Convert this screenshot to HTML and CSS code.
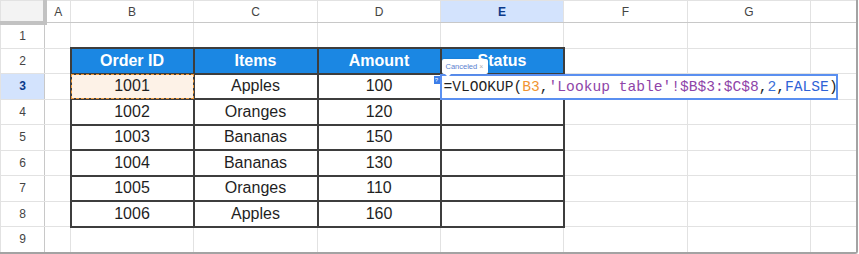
FILE: index.html
```html
<!DOCTYPE html>
<html>
<head>
    <meta charset="UTF-8">
    <title>Lookup sheet</title>
    <link rel="stylesheet" href="styles.css">
</head>
<body>
<div class="frame">
    <table class="sheet">
        <colgroup>
            <col class="col-rh">
            <col class="col-a">
            <col class="col-w">
            <col class="col-w2">
            <col class="col-w">
            <col class="col-w">
            <col class="col-w2">
            <col class="col-w">
            <col class="col-h">
        </colgroup>
        <thead>
            <tr>
                <th class="corner"></th>
                <th>A</th>
                <th>B</th>
                <th>C</th>
                <th>D</th>
                <th class="sel">E</th>
                <th>F</th>
                <th>G</th>
                <th></th>
            </tr>
        </thead>
        <tbody>
            <tr>
                <th>1</th>
                <td></td><td></td><td></td><td></td><td></td><td></td><td></td><td></td>
            </tr>
            <tr>
                <th>2</th>
                <td></td>
                <td class="t hd">Order ID</td>
                <td class="t hd">Items</td>
                <td class="t hd">Amount</td>
                <td class="t hd">Status</td>
                <td></td><td></td><td></td>
            </tr>
            <tr>
                <th class="sel">3</th>
                <td></td>
                <td class="t ref">1001</td>
                <td class="t">Apples</td>
                <td class="t">100</td>
                <td class="t active">
                    <div class="chip">Canceled <span class="chip-x">×</span></div>
                    <div class="badge">?</div>
                    <div class="editor">=VLOOKUP(<span class="f-ref">B3</span>,<span class="f-range">'Lookup table'!$B$3:$C$8</span>,<span class="f-num">2</span>,<span class="f-bool">FALSE</span>)</div>
                </td>
                <td></td><td></td><td></td>
            </tr>
            <tr>
                <th>4</th>
                <td></td>
                <td class="t">1002</td>
                <td class="t">Oranges</td>
                <td class="t">120</td>
                <td class="t"></td>
                <td></td><td></td><td></td>
            </tr>
            <tr>
                <th>5</th>
                <td></td>
                <td class="t">1003</td>
                <td class="t">Bananas</td>
                <td class="t">150</td>
                <td class="t"></td>
                <td></td><td></td><td></td>
            </tr>
            <tr>
                <th>6</th>
                <td></td>
                <td class="t">1004</td>
                <td class="t">Bananas</td>
                <td class="t">130</td>
                <td class="t"></td>
                <td></td><td></td><td></td>
            </tr>
            <tr>
                <th>7</th>
                <td></td>
                <td class="t">1005</td>
                <td class="t">Oranges</td>
                <td class="t">110</td>
                <td class="t"></td>
                <td></td><td></td><td></td>
            </tr>
            <tr>
                <th>8</th>
                <td></td>
                <td class="t">1006</td>
                <td class="t">Apples</td>
                <td class="t">160</td>
                <td class="t"></td>
                <td></td><td></td><td></td>
            </tr>
            <tr>
                <th>9</th>
                <td></td><td></td><td></td><td></td><td></td><td></td><td></td><td></td>
            </tr>
        </tbody>
    </table>
</div>
</body>
</html>
```

FILE: styles.css
```css
body {
    margin: 0;
    background-color: white;
    font-family: 'Liberation Sans', Arial, sans-serif;
}

:root {
    --clr-grid: #e2e2e2;
    --clr-border: #3d3d3d;
    --clr-blue: #1b87e3;
    --clr-sel: #d3e3fd;
}

.frame {
    width: 856px;
    height: 252px;
    overflow: hidden;
    border-right: 2px solid #a3a3a3;
    border-bottom: 2px solid #a3a3a3;
    border-bottom-right-radius: 3px;
}

.sheet {
    border-collapse: collapse;
    table-layout: fixed;
    width: 856px;
}

.col-rh { width: 44px; }
.col-a { width: 26px; }
.col-w { width: 123px; }
.col-w2 { width: 124px; }
.col-h { width: 46px; }

.sheet th {
    font-weight: normal;
    font-size: 12px;
    color: #444;
    padding: 0;
    border: 1px solid var(--clr-grid);
}

.sheet thead tr {
    height: 22px;
}

.sheet thead th {
    border-bottom-color: #c8c8c8;
}

.sheet tbody tr {
    height: 25.5px;
}

.sheet tbody th {
    border-right-color: #c8c8c8;
}

.sheet th.corner {
    background-color: #f3f3f3;
    border-right: 4px solid #c2c2c2;
    border-bottom: 4px solid #c2c2c2;
}

.sheet th.sel {
    background-color: var(--clr-sel);
    color: #0b3a8a;
    font-weight: 700;
}

.sheet td {
    border: 1px solid var(--clr-grid);
    padding: 0;
    font-size: 16px;
    color: #1f1f1f;
    text-align: center;
    white-space: nowrap;
}

.sheet td.t {
    border: 2px solid var(--clr-border);
}

.sheet td.hd {
    background-color: var(--clr-blue);
    color: white;
    font-weight: 700;
}

.sheet td.ref {
    position: relative;
    background-color: #fdf2e7;
}

.sheet td.ref::after {
    content: "";
    position: absolute;
    inset: -1px;
    border: 1px dashed #ee9a3c;
}

.sheet td.active {
    position: relative;
}

.editor {
    position: absolute;
    left: -2px;
    top: -1px;
    width: 390px;
    height: 22px;
    padding: 0 2px;
    background-color: white;
    border: 2px solid #5a8ff0;
    font-family: 'Liberation Mono', 'DejaVu Sans Mono', monospace;
    font-size: 14.6px;
    line-height: 22px;
    text-align: left;
    color: #1f1f1f;
    z-index: 2;
}

.f-ref { color: #f09432; }
.f-range { color: #8e44a8; }
.f-num { color: #3a6fd8; }
.f-bool { color: #2f62d6; }

.chip {
    position: absolute;
    left: 0;
    top: -16px;
    width: 42px;
    height: 15px;
    padding-left: 4px;
    background-color: white;
    border-radius: 2px;
    box-shadow: 0 0 2px rgba(0, 0, 0, 0.15);
    font-size: 7.5px;
    line-height: 15px;
    color: #5a82d0;
    text-align: left;
    z-index: 3;
}

.chip::after {
    content: "";
    position: absolute;
    left: 3px;
    bottom: -3px;
    border-left: 3px solid transparent;
    border-right: 3px solid transparent;
    border-top: 3px solid white;
}

.chip-x {
    color: #b0b0b0;
    font-size: 7px;
}

.badge {
    position: absolute;
    left: -8px;
    top: 1px;
    width: 6px;
    height: 8px;
    background-color: #3c7ee8;
    color: white;
    font-size: 6px;
    line-height: 8px;
    text-align: center;
    z-index: 3;
}
```
